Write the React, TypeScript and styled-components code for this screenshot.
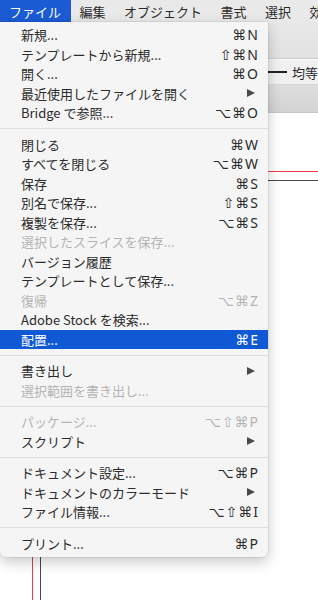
import React from "react";
import styled, { createGlobalStyle } from "styled-components";

const GlobalStyle = createGlobalStyle`
  html, body {
    margin: 0;
    padding: 0;
    background: #ffffff;
  }
  body {
    font-family: "Noto Sans CJK JP", "Noto Sans", sans-serif;
  }
`;

type Item =
  | { kind: "sep" }
  | {
      kind: "item";
      label: string;
      shortcut?: string;
      submenu?: boolean;
      disabled?: boolean;
      selected?: boolean;
    };

const menuBar = ["ファイル", "編集", "オブジェクト", "書式", "選択", "効果"];

const items: Item[] = [
  { kind: "item", label: "新規...", shortcut: "⌘N" },
  { kind: "item", label: "テンプレートから新規...", shortcut: "⇧⌘N" },
  { kind: "item", label: "開く...", shortcut: "⌘O" },
  { kind: "item", label: "最近使用したファイルを開く", submenu: true },
  { kind: "item", label: "Bridge で参照...", shortcut: "⌥⌘O" },
  { kind: "sep" },
  { kind: "item", label: "閉じる", shortcut: "⌘W" },
  { kind: "item", label: "すべてを閉じる", shortcut: "⌥⌘W" },
  { kind: "item", label: "保存", shortcut: "⌘S" },
  { kind: "item", label: "別名で保存...", shortcut: "⇧⌘S" },
  { kind: "item", label: "複製を保存...", shortcut: "⌥⌘S" },
  { kind: "item", label: "選択したスライスを保存...", disabled: true },
  { kind: "item", label: "バージョン履歴" },
  { kind: "item", label: "テンプレートとして保存..." },
  { kind: "item", label: "復帰", shortcut: "⌥⌘Z", disabled: true },
  { kind: "item", label: "Adobe Stock を検索..." },
  { kind: "item", label: "配置...", shortcut: "⌘E", selected: true },
  { kind: "sep" },
  { kind: "item", label: "書き出し", submenu: true },
  { kind: "item", label: "選択範囲を書き出し...", disabled: true },
  { kind: "sep" },
  { kind: "item", label: "パッケージ...", shortcut: "⌥⇧⌘P", disabled: true },
  { kind: "item", label: "スクリプト", submenu: true },
  { kind: "sep" },
  { kind: "item", label: "ドキュメント設定...", shortcut: "⌥⌘P" },
  { kind: "item", label: "ドキュメントのカラーモード", submenu: true },
  { kind: "item", label: "ファイル情報...", shortcut: "⌥⇧⌘I" },
  { kind: "sep" },
  { kind: "item", label: "プリント...", shortcut: "⌘P" },
];

const Screen = styled.div`
  position: relative;
  width: 318px;
  height: 600px;
  overflow: hidden;
  display: flex;
  flex-direction: column;
  background: #ffffff;
`;

const MenuBar = styled.div`
  height: 22px;
  flex: none;
  display: flex;
  background: #e9e9e9;
  white-space: nowrap;
`;

const MenuBarItem = styled.div<{ $active?: boolean }>`
  display: flex;
  align-items: center;
  padding: 0 9.5px 0 9px;
  font-size: 13px;
  color: ${(p) => (p.$active ? "#ffffff" : "#2b2b2b")};
  background: ${(p) => (p.$active ? "#1b5bd4" : "transparent")};
`;

const Toolbar = styled.div`
  height: 36px;
  flex: none;
  background: linear-gradient(#e8e8e8, #e2e2e2);
  border-bottom: 1px solid #cdcdcd;
`;

const ControlBar = styled.div`
  height: 24px;
  flex: none;
  display: flex;
  align-items: center;
  padding-left: 256px;
  background: #f1f1f1;
  border-top: 1px solid #fafafa;
  border-bottom: 1px solid #d6d6d6;
  font-size: 13px;
  color: #2b2b2b;
  white-space: nowrap;
`;

const StrokeLine = styled.span`
  width: 32px;
  height: 2px;
  background: #222;
  margin-right: 5px;
`;

const TabBar = styled.div`
  height: 27px;
  flex: none;
  background: linear-gradient(#dedede, #d3d3d3);
  border-bottom: 1px solid #c6c6c6;
`;

const Canvas = styled.div`
  flex: 1;
  background: #ffffff;
  padding: 58px 0 0 32px;
`;

const Bleed = styled.div`
  border-top: 1px solid #ef3a4a;
  border-left: 1px solid #ef3a4a;
  padding: 8px 0 0 7px;
`;

const Artboard = styled.div`
  height: 500px;
  border-top: 1.5px solid #4a4a4a;
  border-left: 1.5px solid #4a4a4a;
`;

const Dropdown = styled.div`
  position: absolute;
  top: 22px;
  left: 0;
  width: 268px;
  padding: 3px 0 4px;
  box-sizing: border-box;
  background: #f5f5f5;
  border-radius: 0 0 6px 6px;
  box-shadow: 0 5px 14px rgba(0, 0, 0, 0.22), 0 0 0 0.5px rgba(0, 0, 0, 0.12);
`;

const Row = styled.div<{ $disabled?: boolean; $selected?: boolean }>`
  height: 19.5px;
  display: flex;
  align-items: center;
  justify-content: space-between;
  padding: 0 10px 0 21px;
  font-size: 13px;
  white-space: nowrap;
  color: ${(p) =>
    p.$selected ? "#ffffff" : p.$disabled ? "#b4b4b4" : "#2b2b2b"};
  background: ${(p) => (p.$selected ? "#0f59d5" : "transparent")};
`;

const Shortcut = styled.span`
  font-family: "DejaVu Sans", sans-serif;
  font-size: 14px;
  letter-spacing: 1px;
  margin-right: -1px;
`;

const Key = styled.span`
  font-family: "Noto Sans", sans-serif;
  font-size: 14px;
`;

const SubArrow = styled.span`
  width: 0;
  height: 0;
  margin-right: 3px;
  border-left: 8px solid #4a4a4a;
  border-top: 4.5px solid transparent;
  border-bottom: 4.5px solid transparent;
`;

const Separator = styled.div`
  height: 1px;
  margin: 5.5px 0;
  background: #dedede;
`;

export default function App() {
  return (
    <>
      <GlobalStyle />
      <Screen>
        <MenuBar>
          {menuBar.map((m, i) => (
            <MenuBarItem key={m} $active={i === 0}>
              {m}
            </MenuBarItem>
          ))}
        </MenuBar>
        <Toolbar />
        <ControlBar>
          <StrokeLine />
          均等
        </ControlBar>
        <TabBar />
        <Canvas>
          <Bleed>
            <Artboard />
          </Bleed>
        </Canvas>

        <Dropdown>
          {items.map((it, i) =>
            it.kind === "sep" ? (
              <Separator key={i} />
            ) : (
              <Row key={i} $disabled={it.disabled} $selected={it.selected}>
                <span>{it.label}</span>
                {it.shortcut && (
                  <Shortcut>
                    {it.shortcut.slice(0, -1)}
                    <Key>{it.shortcut.slice(-1)}</Key>
                  </Shortcut>
                )}
                {it.submenu && <SubArrow />}
              </Row>
            )
          )}
        </Dropdown>
      </Screen>
    </>
  );
}
